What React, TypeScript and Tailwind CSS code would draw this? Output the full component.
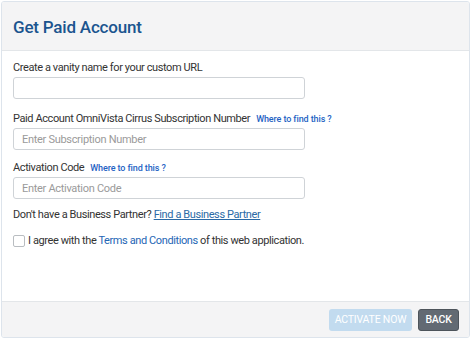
import React from 'react';

const WhereLink = () => (
  <a href="#" className="ml-[6px] text-[9px] font-medium tracking-[-0.1px] text-[#1f63c4]">
    Where to find this ?
  </a>
);

const Field = ({ placeholder }: { placeholder?: string }) => (
  <input
    type="text"
    placeholder={placeholder}
    className="h-[22px] w-[292px] shrink-0 rounded-[3px] border border-[#cfd3d7] bg-white px-[8px] text-[11px] tracking-[-0.3px] text-[#333] placeholder:text-[#9a9a9a] outline-none"
  />
);

export default function App() {
  return (
    <div className="h-[339px] w-[471px] bg-white p-[1px] font-['Roboto',sans-serif]">
      <div className="flex h-[337px] flex-col overflow-hidden rounded-[3px] border border-[#dde4ec] bg-white">
        <div className="flex h-[49px] shrink-0 items-center border-b border-[#e3e6e9] bg-[#f4f4f5] px-[11px] pt-[4px]">
          <h1 className="text-[17px] font-medium tracking-[-0.2px] text-[#1b558f]">Get Paid Account</h1>
        </div>
        <div className="flex flex-1 flex-col px-[11px] pt-[9px] text-[11px] tracking-[-0.4px] text-[#333]">
          <label className="mb-[1px] leading-[16px]">Create a vanity name for your custom URL</label>
          <Field />
          <label className="mb-[1px] mt-[12px] leading-[16px]">
            Paid Account OmniVista Cirrus Subscription Number
            <WhereLink />
          </label>
          <Field placeholder="Enter Subscription Number" />
          <label className="mb-[1px] mt-[10px] leading-[16px]">
            Activation Code
            <WhereLink />
          </label>
          <Field placeholder="Enter Activation Code" />
          <p className="mt-[8px] leading-[16px]">
            Don't have a Business Partner?{' '}
            <a href="#" className="text-[#2b6aa6] underline">Find a Business Partner</a>
          </p>
          <label className="mt-[10px] flex items-center gap-[3px] leading-[16px]">
            <span className="inline-block h-[12px] w-[12px] rounded-[2px] border border-[#b9bdc1] bg-white" />
            <span>
              I agree with the <a href="#" className="text-[#2466b5]">Terms and Conditions</a> of this web
              application.
            </span>
          </label>
        </div>
        <div className="flex h-[36px] shrink-0 items-center justify-end gap-[6px] border-t border-[#e3e6e9] bg-[#f4f4f5] pr-[10px]">
          <button className="h-[22px] w-[83px] rounded-[3px] bg-[#c2dbef] text-[10.5px] tracking-[-0.2px] text-white">
            ACTIVATE NOW
          </button>
          <button className="h-[22px] w-[41px] rounded-[3px] border border-[#4d545b] bg-[#626a73] text-[10.5px] font-medium tracking-[-0.2px] text-white">
            BACK
          </button>
        </div>
      </div>
    </div>
  );
}
